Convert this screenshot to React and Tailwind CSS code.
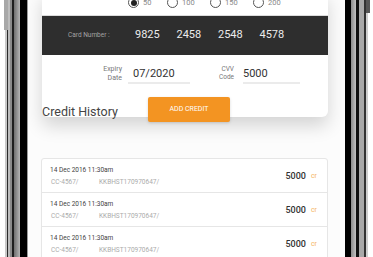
import React from 'react';

const leftStripes = [
  'w-[5px] bg-white',
  'w-[2px] bg-[#c9c9c9]',
  'w-px bg-[#2a2a2a]',
  'w-[2px] bg-[#bdbdbd]',
  'w-[2px] bg-[#8a8a8a]',
  'w-[2px] bg-[#1e1e1e]',
  'w-[6px] bg-gradient-to-r from-[#6f6f6f] to-[#b5b5b5]',
  'w-[7px] bg-black',
  'w-px bg-[#9a9a9a]',
];

const rightStripes = [
  'w-[6px] bg-black',
  'w-[5px] bg-gradient-to-r from-[#8c8c8c] to-[#c2c2c2]',
  'w-[3px] bg-[#111]',
  'w-[5px] bg-[#a9a9a9]',
  'w-[2px] bg-[#333]',
  'w-[2px] bg-[#cfcfcf]',
  'w-[5px] bg-white',
];

const amounts = [
  { w: 'w-[39px]', label: '50', on: true },
  { w: 'w-[43px]', label: '100' },
  { w: 'w-[43px]', label: '150' },
  { w: 'w-[43px]', label: '200' },
];

const history = [1, 2, 3];

function Bezel({ stripes, side }) {
  return (
    <div className="relative flex h-full shrink-0">
      {stripes.map((s, i) => (
        <div key={i} className={s + ' h-full'} />
      ))}
      {side === 'left' ? (
        <div className="absolute left-[4px] top-0 h-[30px] w-[4px] bg-[#a8a8a8]" />
      ) : (
        <div className="absolute right-[3px] top-0 h-[13px] w-[4px] bg-[#555]" />
      )}
    </div>
  );
}

export default function App() {
  return (
    <div className="w-[373px] h-[257px] overflow-hidden flex bg-white font-['Roboto',sans-serif]">
      <Bezel stripes={leftStripes} side="left" />

      <div className="flex-1 h-full flex flex-col pl-[14px] pr-[17px] bg-[#fcfcfc]">
        <div className="-mt-[10px] w-[286px] bg-white rounded-md shadow-[0_9px_18px_rgba(0,0,0,0.16)] flex flex-col">
          <div className="h-[26px] flex items-end pb-[7px] pl-[86px] border-b border-[#dcdcdc]">
            {amounts.map((a) => (
              <div key={a.label} className={a.w + ' flex items-center gap-[4px]'}>
                <span className="w-[11px] h-[11px] rounded-full border border-[#555] flex items-center justify-center">
                  {a.on && <span className="w-[6px] h-[6px] rounded-full bg-[#222]" />}
                </span>
                <span className="text-[7.5px] leading-[10px] text-[#888]">{a.label}</span>
              </div>
            ))}
          </div>

          <div className="h-[39px] bg-[#2e2e2e] flex items-center pl-[26px]">
            <span className="w-[67px] text-[6.5px] text-[#a3a3a3]">Card Number :</span>
            {['9825', '2458', '2548', '4578'].map((n) => (
              <span key={n} className="w-[41.5px] text-[11px] text-[#ececec]">{n}</span>
            ))}
          </div>

          <div className="h-[62px] flex items-start pt-[10px] pl-[60px]">
            <div className="w-[20px] text-right text-[7px] leading-[9px] text-[#777]">
              Expiry<br />Date
            </div>
            <div className="ml-[6px] w-[62px] h-[19px] pl-[5px] pt-[1px] border-b-2 border-[#ebebeb] text-[11px] leading-[15px] text-[#333]">
              07/2020
            </div>
            <div className="ml-[28px] w-[16px] text-right text-[6.5px] leading-[8px] text-[#777]">
              CVV<br />Code
            </div>
            <div className="ml-[9px] w-[57px] h-[19px] pt-[1px] border-b-2 border-[#ebebeb] text-[11px] leading-[15px] text-[#333]">
              5000
            </div>
          </div>
        </div>

        <div className="-mt-[20px] relative flex items-start h-[25px]">
          <span className="w-[106px] mt-[7px] text-[12.5px] leading-[15px] text-[#444]">Credit History</span>
          <button className="w-[82px] h-[25px] rounded-[2px] bg-[#f39422] text-white text-[7px] shadow-[0_1px_3px_rgba(0,0,0,0.15)]">
            ADD CREDIT
          </button>
        </div>

        <div className="mt-[36px] w-[287px] -ml-px border border-[#e6e6e6] rounded-[3px] bg-white">
          {history.map((i) => (
            <div key={i} className="h-[34px] flex items-center justify-between pl-[8px] pr-[10px] border-b border-[#e6e6e6]">
              <div className="flex flex-col pt-[1px]">
                <span className="text-[6.5px] leading-[10px] text-[#444]">14 Dec 2016 11:30am</span>
                <div className="flex mt-[2px] text-[6.5px] leading-[10px] text-[#ababab]">
                  <span className="w-[49px] pl-px">CC-4567/</span>
                  <span>KKBHST170970647/</span>
                </div>
              </div>
              <div className="flex items-center gap-[5px] pt-[2px]">
                <span className="text-[9px] font-medium text-[#333]">5000</span>
                <span className="text-[7px] text-[#f6b463]">cr</span>
              </div>
            </div>
          ))}
        </div>
      </div>

      <Bezel stripes={rightStripes} side="right" />
    </div>
  );
}
